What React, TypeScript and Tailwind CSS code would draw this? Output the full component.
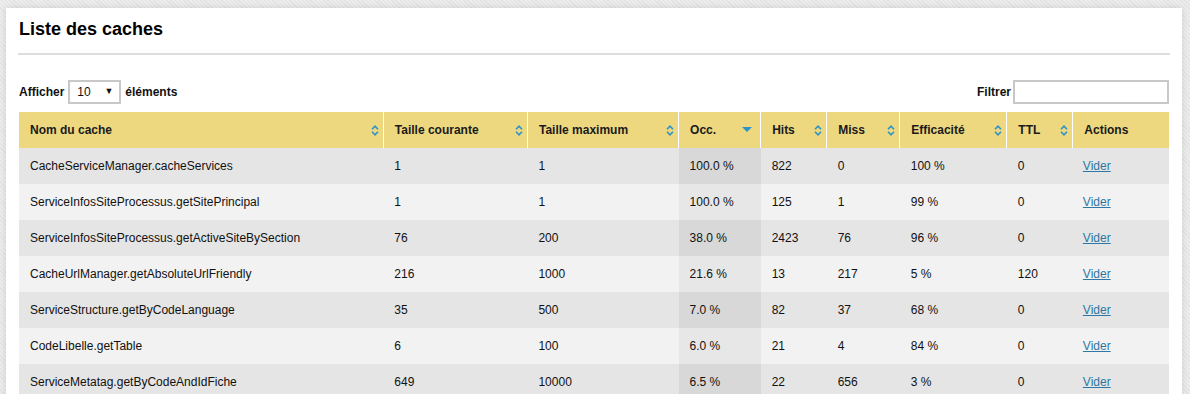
import React from "react";

type Row = {
  name: string;
  cur: string;
  max: string;
  occ: string;
  hits: string;
  miss: string;
  eff: string;
  ttl: string;
};

const rows: Row[] = [
  { name: "CacheServiceManager.cacheServices", cur: "1", max: "1", occ: "100.0 %", hits: "822", miss: "0", eff: "100 %", ttl: "0" },
  { name: "ServiceInfosSiteProcessus.getSitePrincipal", cur: "1", max: "1", occ: "100.0 %", hits: "125", miss: "1", eff: "99 %", ttl: "0" },
  { name: "ServiceInfosSiteProcessus.getActiveSiteBySection", cur: "76", max: "200", occ: "38.0 %", hits: "2423", miss: "76", eff: "96 %", ttl: "0" },
  { name: "CacheUrlManager.getAbsoluteUrlFriendly", cur: "216", max: "1000", occ: "21.6 %", hits: "13", miss: "217", eff: "5 %", ttl: "120" },
  { name: "ServiceStructure.getByCodeLanguage", cur: "35", max: "500", occ: "7.0 %", hits: "82", miss: "37", eff: "68 %", ttl: "0" },
  { name: "CodeLibelle.getTable", cur: "6", max: "100", occ: "6.0 %", hits: "21", miss: "4", eff: "84 %", ttl: "0" },
  { name: "ServiceMetatag.getByCodeAndIdFiche", cur: "649", max: "10000", occ: "6.5 %", hits: "22", miss: "656", eff: "3 %", ttl: "0" },
];

// column headers: label, width, sort state
const cols: { label: string; w: string; sort: "both" | "desc" | "none" }[] = [
  { label: "Nom du cache", w: "w-[364px]", sort: "both" },
  { label: "Taille courante", w: "w-[144px]", sort: "both" },
  { label: "Taille maximum", w: "w-[151px]", sort: "both" },
  { label: "Occ.", w: "w-[82px]", sort: "desc" },
  { label: "Hits", w: "w-[66px]", sort: "both" },
  { label: "Miss", w: "w-[73px]", sort: "both" },
  { label: "Efficacité", w: "w-[107px]", sort: "both" },
  { label: "TTL", w: "w-[66px]", sort: "both" },
  { label: "Actions", w: "w-[96px]", sort: "none" },
];

function SortBoth() {
  return (
    <svg width="8" height="11" viewBox="0 0 8 11" className="shrink-0">
      <path d="M1 4.2 L4 1.2 L7 4.2" fill="none" stroke="#2b93c8" strokeWidth="1.6" />
      <path d="M1 6.8 L4 9.8 L7 6.8" fill="none" stroke="#2b93c8" strokeWidth="1.6" />
    </svg>
  );
}

function SortDesc() {
  return (
    <svg width="10" height="6" viewBox="0 0 10 6" className="shrink-0">
      <path d="M0 0 L10 0 L5 5 Z" fill="#2b93c8" />
    </svg>
  );
}

export default function App() {
  return (
    <div className="min-h-screen bg-[#e8e8e8] bg-[repeating-linear-gradient(45deg,#e3e3e3_0px,#e3e3e3_1px,#ececec_1px,#ececec_3px)] pt-[8px] pl-[6px] pr-[8px] font-['Liberation_Sans',Arial,sans-serif] text-[#111]">
      <div className="bg-white shadow-[0_0_6px_rgba(0,0,0,0.12)] px-[13px] pt-[10px] pb-6">
        <h1 className="text-[18px] leading-[22px] font-bold text-black">Liste des caches</h1>
        <div className="mt-[13px] -mx-px h-[2px] bg-[#dddddd]" />

        {/* length + filter controls */}
        <div className="mt-[24px] flex h-[24px] items-center justify-between text-[12px] font-bold">
          <div className="flex items-center gap-[4px] pt-px">
            <span>Afficher</span>
            <div className="flex h-[24px] w-[53px] items-center justify-between border-2 border-[#c8c8c8] pl-[7px] pr-[6px] font-normal">
              <span>10</span>
              <span className="text-[9px]">▼</span>
            </div>
            <span>éléments</span>
          </div>
          <div className="flex items-center gap-[2px] pt-px">
            <span>Filtrer</span>
            <div className="h-[24px] w-[156px] border-2 border-[#c8c8c8]" />
          </div>
        </div>

        <table className="mt-[9px] w-full table-fixed border-collapse text-[12px]">
          <colgroup>
            {cols.map((c) => (
              <col key={c.label} className={c.w} />
            ))}
          </colgroup>
          <thead>
            <tr className="h-[36px] bg-[#edd87f]">
              {cols.map((c, i) => (
                <th
                  key={c.label}
                  className={`pl-[11px] text-left font-bold text-[#1a1a1a] ${c.sort === "desc" ? "pr-[8px]" : "pr-[4px]"} ${i < cols.length - 1 ? "border-r border-white" : ""}`}
                >
                  <div className="flex items-center justify-between">
                    <span>{c.label}</span>
                    {c.sort === "both" && <SortBoth />}
                    {c.sort === "desc" && <SortDesc />}
                  </div>
                </th>
              ))}
            </tr>
          </thead>
          <tbody>
            {rows.map((r, i) => {
              const odd = i % 2 === 0;
              return (
                <tr key={r.name} className={`h-[36px] ${odd ? "bg-[#e5e5e5]" : "bg-[#f2f2f2]"}`}>
                  <td className="px-[11px]">{r.name}</td>
                  <td className="px-[11px]">{r.cur}</td>
                  <td className="px-[11px]">{r.max}</td>
                  <td className={`px-[11px] ${odd ? "bg-[#d8d8d8]" : "bg-[#e7e7e7]"}`}>{r.occ}</td>
                  <td className="px-[11px]">{r.hits}</td>
                  <td className="px-[11px]">{r.miss}</td>
                  <td className="px-[11px]">{r.eff}</td>
                  <td className="px-[11px]">{r.ttl}</td>
                  <td className="px-[10px]">
                    <a href="#" className="text-[#2f77a3] underline">
                      Vider
                    </a>
                  </td>
                </tr>
              );
            })}
          </tbody>
        </table>
      </div>
    </div>
  );
}
